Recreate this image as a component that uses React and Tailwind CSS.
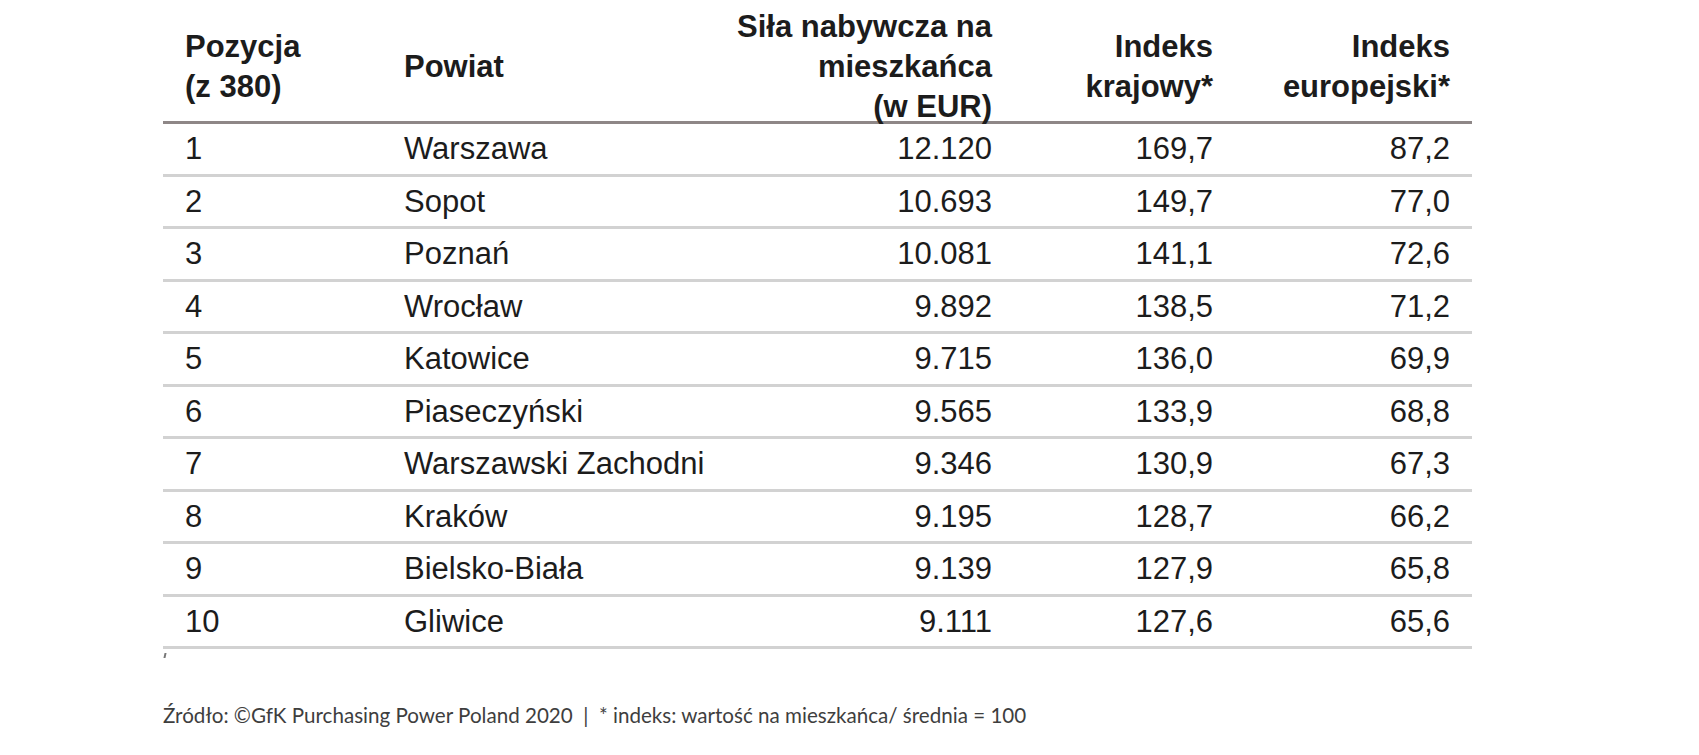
import React from 'react';

const rows = [
    ['1', 'Warszawa', '12.120', '169,7', '87,2'],
    ['2', 'Sopot', '10.693', '149,7', '77,0'],
    ['3', 'Poznań', '10.081', '141,1', '72,6'],
    ['4', 'Wrocław', '9.892', '138,5', '71,2'],
    ['5', 'Katowice', '9.715', '136,0', '69,9'],
    ['6', 'Piaseczyński', '9.565', '133,9', '68,8'],
    ['7', 'Warszawski Zachodni', '9.346', '130,9', '67,3'],
    ['8', 'Kraków', '9.195', '128,7', '66,2'],
    ['9', 'Bielsko-Biała', '9.139', '127,9', '65,8'],
    ['10', 'Gliwice', '9.111', '127,6', '65,6'],
];

const cols = 'grid grid-cols-[219px_323px_309px_221px_237px]';

export default function App() {
    return (
        <div className="w-[1699px] h-[755px] bg-white overflow-hidden">
            <div className="pl-[163px] pt-[7px]">
                <div className="w-[1309px] [font-family:Liberation_Sans,Arimo,Arial,sans-serif] text-[31px] text-[#1c1c1c]">
                    {/* header */}
                    <div className={`${cols} h-[117px] border-b-[3px] border-[#8e8787] font-bold leading-[40px] items-center`}>
                        <div className="pl-[22px]">Pozycja<br />(z 380)</div>
                        <div className="pl-[22px]">Powiat</div>
                        <div className="pr-[22px] text-right">Siła nabywcza na<br />mieszkańca<br />(w EUR)</div>
                        <div className="pr-[22px] text-right">Indeks<br />krajowy*</div>
                        <div className="pr-[22px] text-right">Indeks<br />europejski*</div>
                    </div>
                    {rows.map((r) => (
                        <div key={r[0]} className={`${cols} h-[52.5px] border-b-[3px] border-[#d2d2d2] items-center leading-none`}>
                            <div className="pl-[22px]">{r[0]}</div>
                            <div className="pl-[22px]">{r[1]}</div>
                            <div className="pr-[22px] text-right">{r[2]}</div>
                            <div className="pr-[22px] text-right">{r[3]}</div>
                            <div className="pr-[22px] text-right">{r[4]}</div>
                        </div>
                    ))}
                </div>
                <div className="h-[47px]">
                    <div className="w-[2px] h-[5px] bg-[#777] mt-[4px] ml-[1px] -skew-x-12" />
                </div>
                <div className="[font-family:Lato,Open_Sans,sans-serif] text-[20.6px] text-[#3e3e3e] whitespace-pre">
                    Źródło: ©GfK Purchasing Power Poland 2020  |  * indeks: wartość na mieszkańca/ średnia = 100
                </div>
            </div>
        </div>
    );
}
